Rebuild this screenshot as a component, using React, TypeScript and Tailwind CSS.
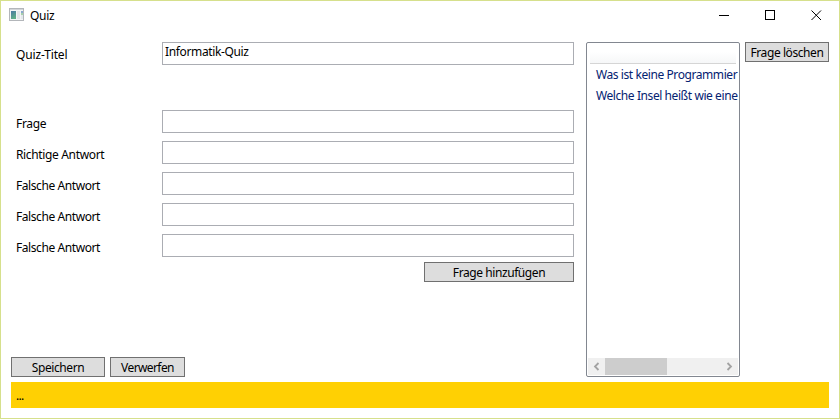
import React from "react";

const answers = [
  { label: "Frage", className: "pt-[6px] tracking-[-0.3px]" },
  { label: "Richtige Antwort", className: "pt-[6px] tracking-[-0.35px]" },
  { label: "Falsche Antwort", className: "pt-[6px] tracking-[-0.42px]" },
  { label: "Falsche Antwort", className: "pt-[6px] tracking-[-0.42px]" },
  { label: "Falsche Antwort", className: "pt-[6px] tracking-[-0.42px]" },
];

function Field({ label, value, className }: { label: string; value?: string; className: string }) {
  return (
    <div className="flex h-[23px]">
      <span className={`w-[151px] shrink-0 pl-[5px] leading-4 ${className}`}>{label}</span>
      <div className="h-[23px] w-[412px] border border-[#abadb3] bg-white pl-[2px] pt-px leading-4 tracking-[-0.36px]">{value}</div>
    </div>
  );
}

function Button({ children, className }: { children: React.ReactNode; className: string }) {
  return (
    <button className={`flex h-5 shrink-0 justify-center whitespace-nowrap border border-[#707070] bg-[#dddddd] pt-[2px] leading-4 ${className}`}>
      {children}
    </button>
  );
}

function WindowIcon() {
  return (
    <svg width="16" height="14" viewBox="0 0 16 14" shapeRendering="crispEdges">
      <defs>
        <linearGradient id="pane" x1="0" y1="0" x2="0.4" y2="1">
          <stop offset="0" stopColor="#4b78a4" />
          <stop offset="1" stopColor="#5fae87" />
        </linearGradient>
      </defs>
      <rect x="1.5" y="0.5" width="14" height="12" fill="#f4f5f6" stroke="#b3b6ba" />
      <rect x="2" y="1" width="13" height="1" fill="#d2d5d9" />
      <rect x="3" y="3" width="5" height="8" fill="url(#pane)" />
      <rect x="9" y="3" width="3" height="8" fill="#e3e5e8" />
      <rect x="13" y="3" width="2" height="2" fill="#8aa9cf" />
      <rect x="13" y="5" width="2" height="2" fill="#a5d1ab" />
      <rect x="13" y="7" width="2" height="4" fill="#e3e8ec" />
    </svg>
  );
}

export default function App() {
  return (
    <div className="flex h-[419px] w-[840px] flex-col overflow-hidden border border-[#d6e08c] bg-white font-['Noto_Sans','Open_Sans',sans-serif] text-[12px] tracking-[-0.42px] text-black">
      <header className="flex h-[41px] shrink-0 items-start justify-between pl-[7px]">
        <div className="flex pt-[7px]">
          <WindowIcon />
          <span className="pl-[6px] leading-4 tracking-[-0.3px]">Quiz</span>
        </div>
        <div className="flex gap-[35px] pr-[17px] pt-[9px]">
          <svg width="11" height="11" viewBox="0 0 11 11" shapeRendering="crispEdges"><path d="M0 5.5h10" stroke="#000" /></svg>
          <svg width="11" height="11" viewBox="0 0 11 11" shapeRendering="crispEdges"><rect x="0.5" y="0.5" width="9" height="9" fill="none" stroke="#000" /></svg>
          <svg width="11" height="11" viewBox="0 0 11 11"><path d="M.5.5l9.5 9.5M10 .5L.5 10" stroke="#000" /></svg>
        </div>
      </header>

      <main className="flex h-[335px] shrink-0 pl-[10px]">
        <section className="flex w-[563px] shrink-0 flex-col">
          <Field label="Quiz-Titel" value="Informatik-Quiz" className="pt-[5px] tracking-[-0.15px]" />
          <div className="mt-[45px] flex flex-col gap-2">
            {answers.map((a, i) => <Field key={i} label={a.label} className={a.className} />)}
          </div>
          <div className="mt-[5px] flex justify-end">
            <Button className="w-[150px]">Frage hinzufügen</Button>
          </div>
          <div className="mt-auto flex gap-[5px]">
            <Button className="w-[94px]">Speichern</Button>
            <Button className="w-[75px] tracking-[-0.6px]">Verwerfen</Button>
          </div>
        </section>

        <section className="ml-3 flex w-[154px] shrink-0 flex-col rounded-[2px] border border-[#828790] p-px">
          <div className="mx-[2px] h-5 shrink-0 border-b border-[#d5d5d5] bg-gradient-to-b from-white from-40% to-[#f6f7f8]" />
          <ul className="min-h-0 flex-1 whitespace-nowrap pl-2 text-[#042271]">
            <li className="h-[21px] pt-[3px] leading-4">Was ist keine Programmier</li>
            <li className="h-[21px] pt-[3px] leading-4">Welche Insel heißt wie eine</li>
          </ul>
          <div className="flex h-[17px] shrink-0 items-center bg-[#f0f0f0]">
            <svg width="17" height="17" viewBox="0 0 17 17" fill="none"><path d="M10.5 5L7 8.5L10.5 12" stroke="#a3a3a3" strokeWidth="1.8" /></svg>
            <div className="h-[17px] w-[62px] bg-[#cdcdcd]" />
            <svg className="ml-auto" width="17" height="17" viewBox="0 0 17 17" fill="none"><path d="M6.5 5L10 8.5L6.5 12" stroke="#a3a3a3" strokeWidth="1.8" /></svg>
          </div>
        </section>

        <Button className="ml-[5px] w-[84px]">Frage löschen</Button>
      </main>

      <footer className="ml-[10px] mt-[5px] h-[26px] w-[818px] shrink-0 bg-[#ffd003] pl-[5px] pt-[6px] leading-4 tracking-[-0.7px]">...</footer>
    </div>
  );
}
